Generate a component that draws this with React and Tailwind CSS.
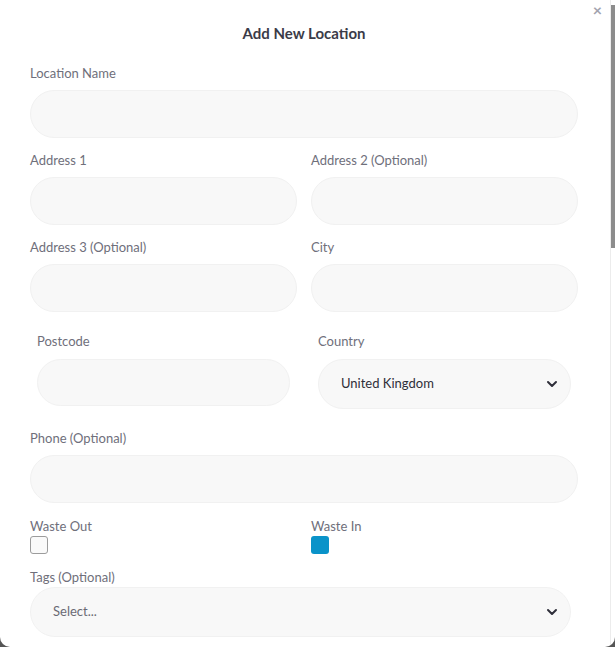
import React from "react";

const labelCls = "block text-[13px] leading-4 text-[#6f6f7b]";
const inputCls = "block w-full rounded-full bg-[#f8f8f8] border border-[#f1f1f1] outline-none";

const Chevron = () => (
  <svg width="12" height="8" viewBox="0 0 12 8" fill="none">
    <path d="M2 2l4 4 4-4" stroke="#2f2f3a" strokeWidth="2" strokeLinecap="round" strokeLinejoin="round" />
  </svg>
);

const Field = ({ label, className = "" }) => (
  <div className={className}>
    <label className={labelCls}>{label}</label>
    <input className={`${inputCls} mt-[9px] h-12`} />
  </div>
);

const App = () => {
  return (
    <div className="h-[647px] w-[615px] bg-[#555555] font-['Lato','Liberation_Sans',sans-serif]">
      <div className="relative flex h-full w-full overflow-hidden rounded-b-[10px] bg-white">
        {/* close */}
        <button className="absolute right-[13px] top-[2px] text-[16px] font-bold leading-4 text-[#a2a2ae]">
          ×
        </button>

        <form className="flex-1 pl-[30px] pr-[32px] pt-[24px]">
          <h2 className="text-center text-[15px] font-bold leading-[18px] text-[#3b3b48]">
            Add New Location
          </h2>

          {/* Location name */}
          <Field label="Location Name" className="mt-[23px]" />

          {/* Address 1 / 2 */}
          <div className="mt-[14px] grid grid-cols-2 gap-x-[14px]">
            <Field label="Address 1" />
            <Field label="Address 2 (Optional)" />
          </div>

          {/* Address 3 / City */}
          <div className="mt-[14px] grid grid-cols-2 gap-x-[14px]">
            <Field label="Address 3 (Optional)" />
            <Field label="City" />
          </div>

          {/* Postcode / Country */}
          <div className="mt-[21px] grid grid-cols-2 gap-x-[28px] px-[7px]">
            <div>
              <label className={labelCls}>Postcode</label>
              <input className={`${inputCls} mt-[10px] h-[47px]`} />
            </div>
            <div>
              <label className={labelCls}>Country</label>
              <div className="mt-[10px] flex h-[50px] items-center justify-between rounded-full border border-[#f1f1f1] bg-[#f8f8f8] pl-[22px] pr-[12px]">
                <span className="text-[13px] text-[#2f2f38]">United Kingdom</span>
                <Chevron />
              </div>
            </div>
          </div>

          {/* Phone */}
          <Field label="Phone (Optional)" className="mt-[21px]" />

          {/* Waste */}
          <div className="mt-[15px] grid grid-cols-2 gap-x-[14px]">
            <div>
              <label className={labelCls}>Waste Out</label>
              <span className="mt-[2px] block h-[18px] w-[18px] rounded-[3px] border border-[#9c9c9c] bg-[#fafafa]" />
            </div>
            <div>
              <label className={labelCls}>Waste In</label>
              <span className="mt-[2px] block h-[18px] w-[18px] rounded-[3px] bg-[#0a93c9]" />
            </div>
          </div>

          {/* Tags */}
          <div className="mt-[15px] pr-[7px]">
            <label className={labelCls}>Tags (Optional)</label>
            <div className="mt-[2px] flex h-[50px] items-center justify-between rounded-full border border-[#f1f1f1] bg-[#f8f8f8] pl-[22px] pr-[12px]">
              <span className="text-[13px] text-[#6a6a74]">Select...</span>
              <Chevron />
            </div>
          </div>
        </form>

        {/* scrollbar */}
        <div className="w-[5px] border-l border-[#ececec] pt-[5px]">
          <div className="h-[243px] w-full bg-[#8c8c8c]" />
        </div>
      </div>
    </div>
  );
};

export default App;
